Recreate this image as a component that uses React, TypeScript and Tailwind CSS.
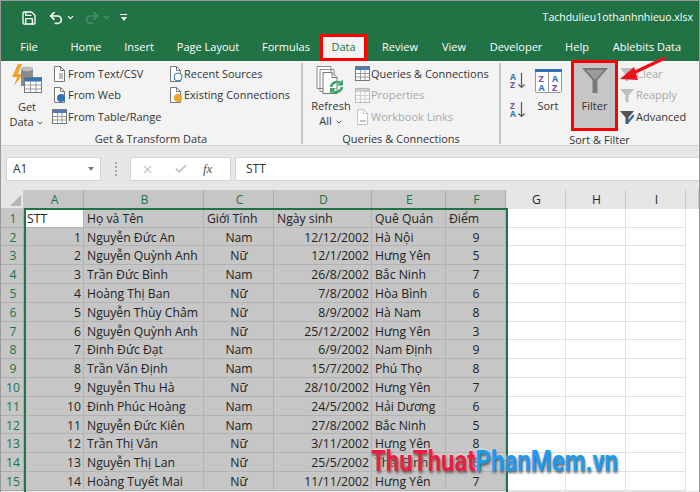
import { ChevronDown, Check, X, Save, Undo2, Redo2 } from 'lucide-react';

const font = 'font-["Open_Sans","Liberation_Sans",sans-serif]';

const tabs = [
  { label: 'File', cls: 'w-[40px] ml-[8px]' },
  { label: 'Home', cls: 'w-[60px] ml-[7px]' },
  { label: 'Insert', cls: 'w-[50px] ml-[-2px]' },
  { label: 'Page Layout', cls: 'w-[80px] ml-[4px]' },
  { label: 'Formulas', cls: 'w-[60px] ml-[8px]' },
];
const tabsRight = [
  { label: 'Review', cls: 'w-[50px] ml-[8px]' },
  { label: 'View', cls: 'w-[40px] ml-[9px]' },
  { label: 'Developer', cls: 'w-[70px] ml-[7px]' },
  { label: 'Help', cls: 'w-[40px] ml-[6px]' },
  { label: 'Ablebits Data', cls: 'w-[80px] ml-[10px]' },
];

const rows: [number, string, string, string, string, number][] = [
  [1, 'Nguyễn Đức An', 'Nam', '12/12/2002', 'Hà Nội', 9],
  [2, 'Nguyễn Quỳnh Anh', 'Nữ', '12/1/2002', 'Hưng Yên', 5],
  [3, 'Trần Đức Bình', 'Nam', '26/8/2002', 'Bắc Ninh', 7],
  [4, 'Hoàng Thị Ban', 'Nữ', '7/8/2002', 'Hòa Bình', 6],
  [5, 'Nguyễn Thùy Châm', 'Nữ', '8/9/2002', 'Hà Nam', 8],
  [6, 'Nguyễn Quỳnh Anh', 'Nữ', '25/12/2002', 'Hưng Yên', 3],
  [7, 'Đinh Đức Đạt', 'Nam', '6/9/2002', 'Nam Định', 9],
  [8, 'Trần Văn Định', 'Nam', '15/7/2002', 'Phú Thọ', 8],
  [9, 'Nguyễn Thu Hà', 'Nữ', '28/10/2002', 'Hưng Yên', 7],
  [10, 'Đinh Phúc Hoàng', 'Nam', '24/5/2002', 'Hải Dương', 6],
  [11, 'Nguyễn Đức Kiên', 'Nam', '27/8/2002', 'Bắc Ninh', 5],
  [12, 'Trần Thị Vân', 'Nữ', '3/11/2002', 'Hưng Yên', 8],
  [13, 'Nguyễn Thị Lan', 'Nữ', '25/5/2002', 'Thái Bình', 6],
  [14, 'Hoàng Tuyết Mai', 'Nữ', '11/11/2002', 'Hưng Yên', 7],
];

const sel = 'bg-[#c6c6c6] border-r border-b border-[#b2b2b2] pl-[3px] pr-[2px] truncate leading-[19px]';
const free = 'bg-white border-r border-b border-[#e0e0e0]';
const rowHead = 'bg-[#c6c6c6] border-r border-b border-[#adadad] text-[#217346] text-center pl-[2px] leading-[19px]';
const colHead = 'bg-[#c6c6c6] border-r border-[#adadad] text-[#217346] text-center pl-[2px] leading-[19px]';
const colHeadOff = 'bg-[#e6e6e6] border-r border-[#c8c8c8] text-[#262626] text-center pl-[2px] leading-[19px]';

function DocIcon({ children, muted }: { children?: React.ReactNode; muted?: boolean }) {
  const c = muted ? '#c4c4c4' : '#777';
  return (
    <svg width="15" height="16" viewBox="0 0 15 16" className="shrink-0">
      <path d="M2.5.5h6l4 4v11h-10z" fill="#fff" stroke={c} />
      <path d="M8.5.5v4h4" fill="none" stroke={c} />
      {children}
    </svg>
  );
}

function TableIcon({ muted }: { muted?: boolean }) {
  return (
    <svg width="15" height="15" viewBox="0 0 15 15" className="shrink-0">
      <rect x=".5" y=".5" width="14" height="14" fill="#fff" stroke={muted ? '#bbb' : '#777'} />
      <rect x="1" y="1" width="13" height="3" fill={muted ? '#ccc' : '#4a7ebb'} />
      <path d="M1 7.5h13M1 11h13M5.5 4v10M10 4v10" stroke={muted ? '#ccc' : '#999'} />
    </svg>
  );
}

function SmallCmd({ icon, label, muted }: { icon: React.ReactNode; label: string; muted?: boolean }) {
  return (
    <div className={`flex items-center h-[21.6px] whitespace-nowrap ${muted ? 'text-[#a8a8a8]' : 'text-[#333]'}`}>
      <span className="w-[18px] flex justify-center">{icon}</span>
      <span>{label}</span>
    </div>
  );
}

function GroupLabel({ children }: { children: React.ReactNode }) {
  return <div className="h-[14px] leading-[18px] text-center text-[#333] whitespace-nowrap">{children}</div>;
}

function GetDataIcon() {
  return (
    <svg width="32" height="32" viewBox="0 0 32 32">
      <path d="M7 1 1 14h5L3 23l9-12H7l4-10z" fill="#eda32c" />
      <path d="M10 6c0-3 12-3 12 0v17H10z" fill="#8a8a8a" />
      <ellipse cx="16" cy="6" rx="6" ry="2.2" fill="#bdbdbd" />
      <rect x="13.5" y="14.5" width="17" height="15" fill="#fff" stroke="#777" />
      <rect x="14" y="15" width="16" height="3.5" fill="#2f75b5" />
      <path d="M14 22h16M14 26h16M19.5 18v11M25 18v11" stroke="#999" />
    </svg>
  );
}

function RefreshIcon() {
  return (
    <svg width="30" height="30" viewBox="0 0 30 30">
      <path d="M1 .5h14v22H1zM4 3.5h14v22H4z" fill="#fff" stroke="#888" />
      <path d="M7 6.5h9l5 5v16H7z" fill="#fff" stroke="#777" />
      <path d="M16 6.5v5h5" fill="none" stroke="#777" />
      <path d="M15 21a6 6 0 0 1 10-3.5M26 21a6 6 0 0 1-10 3.5" fill="none" stroke="#3fa56f" strokeWidth="2.4" />
      <path d="M27 13.5v6h-6zM14 28v-6h6z" fill="#3fa56f" />
    </svg>
  );
}

function SortLetters({ down }: { down?: boolean }) {
  return (
    <svg width="16" height="17" viewBox="0 0 16 17">
      <text x="0" y="7.5" fontSize="8.5" fontWeight="700" fill={down ? '#7b4fb0' : '#2f75b5'} fontFamily="Open Sans">{down ? 'Z' : 'A'}</text>
      <text x="0" y="16" fontSize="8.5" fontWeight="700" fill={down ? '#2f75b5' : '#7b4fb0'} fontFamily="Open Sans">{down ? 'A' : 'Z'}</text>
      <path d="M11.5 1v14M8.5 12.5l3 3 3-3" fill="none" stroke="#555" strokeWidth="1.2" />
    </svg>
  );
}

function SortIcon() {
  return (
    <svg width="27" height="24" viewBox="0 0 27 24">
      <rect x=".5" y=".5" width="26" height="23" rx="1" fill="#fff" stroke="#999" />
      <rect x="0" y="0" width="27" height="3" fill="#2f75b5" />
      <path d="M13.5 3v20" stroke="#999" />
      <text x="3.5" y="13" fontSize="9" fontWeight="700" fill="#7b4fb0" fontFamily="Open Sans">Z</text>
      <text x="3.5" y="22" fontSize="9" fontWeight="700" fill="#2f75b5" fontFamily="Open Sans">A</text>
      <text x="17" y="13" fontSize="9" fontWeight="700" fill="#2f75b5" fontFamily="Open Sans">A</text>
      <text x="17" y="22" fontSize="9" fontWeight="700" fill="#7b4fb0" fontFamily="Open Sans">Z</text>
    </svg>
  );
}

function Funnel({ color = '#777', size = 14, children }: { color?: string; size?: number; children?: React.ReactNode }) {
  return (
    <svg width={size} height={size} viewBox="0 0 14 14" className="shrink-0">
      <path d="M0 1h14L8.5 7.5V14h-3V7.5z" fill={color} />
      {children}
    </svg>
  );
}

export default function App() {
  return (
    <div className={`${font} relative w-[700px] h-[492px] overflow-hidden bg-[#e6e6e6] border-t border-x border-[#9a9a9a] text-[11px]`}>
      {/* Title bar */}
      <div className="h-[33px] bg-[#217346] flex items-center text-white">
        <Save className="ml-[20px] w-[16px] h-[16px]" strokeWidth={2} />
        <Undo2 className="ml-[11px] w-[16px] h-[16px]" strokeWidth={2.4} />
        <ChevronDown className="ml-[2px] w-[9px] h-[9px]" strokeWidth={3} />
        <Redo2 className="ml-[9px] w-[16px] h-[16px] text-[#4f8f6b]" strokeWidth={2.4} />
        <ChevronDown className="ml-[2px] w-[9px] h-[9px] text-[#4f8f6b]" strokeWidth={3} />
        <div className="ml-[9px] flex flex-col items-center gap-[2px]">
          <span className="w-[7px] h-[1px] bg-white" />
          <span className="w-0 h-0 border-x-[3.5px] border-t-[4px] border-x-transparent border-t-white" />
        </div>
        <div className="ml-auto mr-[6px] text-[10.5px]">Tachdulieu1othanhnhieuo.xlsx</div>
      </div>

      {/* Tabs */}
      <div className="h-[27px] bg-[#217346] flex items-center text-white">
        {tabs.map((t) => (
          <div key={t.label} className={`${t.cls} text-center whitespace-nowrap`}>{t.label}</div>
        ))}
        <div className="ml-[4px] w-[47px] h-[27px] bg-[#f3f3f3] border-[3px] border-[#ff0000] text-[#217346] flex items-center justify-center">Data</div>
        {tabsRight.map((t) => (
          <div key={t.label} className={`${t.cls} text-center whitespace-nowrap`}>{t.label}</div>
        ))}
      </div>

      {/* Ribbon */}
      <div className="h-[85px] bg-[#f3f3f3] border-b border-[#d2d2d2] flex text-[#333]">
        {/* Get & Transform */}
        <div className="w-[302px] flex flex-col border-r-2 border-[#c6c6c6] mt-[2px] mb-[1px]">
          <div className="flex-1 flex">
            <div className="w-[46px] flex flex-col items-center pl-[6px]">
              <GetDataIcon />
              <div className="leading-[15px] mt-[4px] text-center">Get<br />Data <ChevronDown className="inline w-[8px] h-[8px]" strokeWidth={2.5} /></div>
            </div>
            <div className="w-[119px] pl-[3px]">
              <SmallCmd label="From Text/CSV" icon={<DocIcon><path d="M7 7h4v6H7z" fill="#bbb" /></DocIcon>} />
              <SmallCmd label="From Web" icon={<DocIcon><circle cx="9" cy="11" r="4" fill="#2f75b5" /></DocIcon>} />
              <SmallCmd label="From Table/Range" icon={<TableIcon />} />
            </div>
            <div>
              <SmallCmd label="Recent Sources" icon={<DocIcon><circle cx="10" cy="11" r="4" fill="#fff" stroke="#2f75b5" /></DocIcon>} />
              <SmallCmd label="Existing Connections" icon={<DocIcon><ellipse cx="10" cy="11" rx="4" ry="4" fill="#eda32c" /></DocIcon>} />
            </div>
          </div>
          <GroupLabel>Get &amp; Transform Data</GroupLabel>
        </div>

        {/* Queries & Connections */}
        <div className="w-[198px] flex flex-col border-r-2 border-[#c6c6c6] mt-[2px] mb-[1px]">
          <div className="flex-1 flex">
            <div className="w-[50px] ml-[3px] pt-[3px] flex flex-col items-center">
              <RefreshIcon />
              <div className="leading-[15px] mt-[2px] text-center">Refresh<br />All <ChevronDown className="inline w-[8px] h-[8px]" strokeWidth={2.5} /></div>
            </div>
            <div className="ml-[-3px]">
              <SmallCmd label="Queries & Connections" icon={<TableIcon />} />
              <SmallCmd muted label="Properties" icon={<TableIcon muted />} />
              <SmallCmd muted label="Workbook Links" icon={<DocIcon muted><path d="M5 12h6" stroke="#c4c4c4" strokeWidth="2" /></DocIcon>} />
            </div>
          </div>
          <GroupLabel>Queries &amp; Connections</GroupLabel>
        </div>

        {/* Sort & Filter */}
        <div className="flex-1 flex flex-col mt-[-1px] mb-[1px]">
          <div className="flex-1 flex">
            <div className="w-[25px] pt-[12px] flex flex-col items-center gap-[12px] ml-[4px]">
              <SortLetters />
              <SortLetters down />
            </div>
            <div className="w-[36px] pt-[9px] flex flex-col items-center">
              <SortIcon />
              <div className="mt-[5px]">Sort</div>
            </div>
            <div className="ml-[5px] w-[47px] h-[71px] border-[3px] border-[#ff0000] bg-[#c6c6c6] flex flex-col items-center pt-[4px]">
              <svg width="26" height="26" viewBox="0 0 26 26">
                <path d="M0 1h26L15.5 13v13h-5V13z" fill="#787878" />
                <path d="M4 3h18l-8 9h-2z" fill="#9c9c9c" />
              </svg>
              <div className="mt-[5px]">Filter</div>
            </div>
            <div className="pt-[3px]">
              <SmallCmd muted label="Clear" icon={<Funnel color="#bdbdbd" />} />
              <SmallCmd muted label="Reapply" icon={<Funnel color="#bdbdbd" />} />
              <SmallCmd label="Advanced" icon={<Funnel color="#555"><path d="M14 5 8 12" stroke="#2f75b5" strokeWidth="2.4" /></Funnel>} />
            </div>
          </div>
          <div className="w-[197px]"><GroupLabel>Sort &amp; Filter</GroupLabel></div>
        </div>
      </div>

      {/* Formula bar */}
      <div className="h-[44px] pt-[11px] pb-[9px] flex items-stretch text-[#333]">
        <div className="ml-[5px] w-[95px] bg-white border border-[#d4d4d4] flex items-center px-[6px]">
          <span className="text-[12px]">A1</span>
          <span className="ml-auto w-0 h-0 border-x-[3.5px] border-t-[4px] border-x-transparent border-t-[#777]" />
        </div>
        <div className="w-[29px] flex flex-col items-center justify-center gap-[2px]">
          <span className="w-[2px] h-[2px] bg-[#aaa]" />
          <span className="w-[2px] h-[2px] bg-[#aaa]" />
          <span className="w-[2px] h-[2px] bg-[#aaa]" />
          <span className="w-[2px] h-[2px] bg-[#aaa]" />
        </div>
        <div className="w-[101px] bg-white border border-[#d4d4d4] flex items-center">
          <X className="ml-[10px] w-[13px] h-[13px] text-[#c0c0c0]" strokeWidth={2} />
          <Check className="ml-[20px] w-[14px] h-[14px] text-[#c0c0c0]" strokeWidth={3} />
          <span className="ml-[15px] font-['Liberation_Serif',serif] italic text-[13px] text-[#555]">fx</span>
        </div>
        <div className="ml-[4px] flex-1 bg-white border-y border-l border-[#d4d4d4] flex items-center pl-[10px] text-[12px]">STT</div>
      </div>

      {/* Sheet */}
      <div className="relative text-[12.2px] text-[#222]">
        <div className="grid grid-cols-[23px_60px_120px_70px_98px_74px_60px_60px_60px_60px_13px] auto-rows-[18.8px]">
          <div className="bg-[#e6e6e6] border-r border-b border-[#c8c8c8] flex items-end justify-end p-[2px]">
            <span className="w-0 h-0 border-l-[11px] border-b-[11px] border-l-transparent border-b-[#b5b5b5]" />
          </div>
          {['A', 'B', 'C', 'D', 'E', 'F'].map((c) => <div key={c} className={colHead}>{c}</div>)}
          {['G', 'H', 'I', ''].map((c) => <div key={c} className={colHeadOff}>{c}</div>)}

          <div className={rowHead}>1</div>
          <div className="bg-white border-r border-b border-[#b2b2b2] pl-[3px] leading-[19px]">STT</div>
          <div className={sel}>Họ và Tên</div>
          <div className={sel}>Giới Tính</div>
          <div className={sel}>Ngày sinh</div>
          <div className={sel}>Quê Quán</div>
          <div className={sel}>Điểm</div>
          <div className={free} /><div className={free} /><div className={free} /><div className="bg-white" />

          {rows.map((r) => (
            <div key={r[0]} className="contents">
              <div className={rowHead}>{r[0] + 1}</div>
              <div className={`${sel} text-right`}>{r[0]}</div>
              <div className={sel}>{r[1]}</div>
              <div className={`${sel} text-center`}>{r[2]}</div>
              <div className={`${sel} text-right`}>{r[3]}</div>
              <div className={sel}>{r[4]}</div>
              <div className={`${sel} text-center`}>{r[5]}</div>
              <div className={free} /><div className={free} /><div className={free} /><div className="bg-white" />
            </div>
          ))}
        </div>
        {/* selection outline */}
        <div className="absolute left-[23px] top-[18px] w-[484px] h-[290px] border-2 border-b-0 border-[#217346] pointer-events-none" />
      </div>

      {/* Annotation arrow */}
      <svg className="absolute left-[600px] top-[45px]" width="80" height="50" viewBox="0 0 80 50">
        <path d="M64 12 30 28" stroke="#e8141c" strokeWidth="3.5" />
        <path d="M19 33 33 21l4 13z" fill="#e8141c" />
      </svg>

      {/* Watermark */}
      <div className="absolute left-[370px] top-[444px] origin-left scale-x-[.8] font-['Roboto',sans-serif] font-bold text-[30px] leading-[32px] whitespace-nowrap [text-shadow:1px_2px_3px_#555,0_0_3px_#fff]">
        <span className="text-[#ee1c3f]">ThuThuat</span>
        <span className="text-[#1c9bf0]">PhanMem.vn</span>
      </div>
    </div>
  );
}
